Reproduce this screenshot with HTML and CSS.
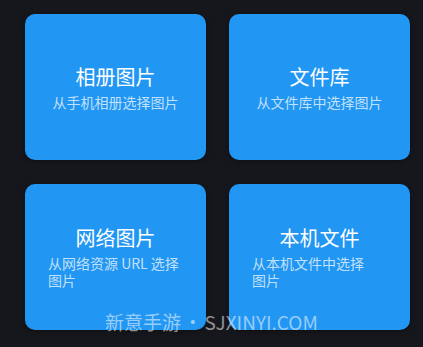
FILE: index.html
```html
<!DOCTYPE html>
<html lang="zh-CN">
<head>
  <meta charset="UTF-8" />
  <meta name="viewport" content="width=device-width, initial-scale=1.0" />
  <title>选择图片</title>
  <link rel="stylesheet" href="styles.css">
</head>
<body>
  <div class="picker">
    <div class="card">
      <h2>相册图片</h2>
      <p>从手机相册选择<span class="word">图片</span></p>
    </div>
    <div class="card">
      <h2>文件库</h2>
      <p>从文件库中选择<span class="word">图片</span></p>
    </div>
    <div class="card">
      <h2>网络图片</h2>
      <p>从网络资源 URL 选择<span class="word">图片</span></p>
    </div>
    <div class="card">
      <h2>本机文件</h2>
      <p>从本机文件中选择<span class="word">图片</span></p>
    </div>
  </div>
  <div class="watermark">新意手游 • SJXINYI.COM</div>
</body>
</html>
```

FILE: styles.css
```css
body {
  margin: 0;
  height: 347px;
  overflow: hidden;
  position: relative;
  background: #16171c;
  font-family: "Noto Sans CJK SC", "Noto Sans", sans-serif;
  color: white;
}
.picker {
  display: grid;
  grid-template-columns: 181px 181px;
  grid-auto-rows: 146px;
  column-gap: 23px;
  row-gap: 24px;
  padding: 14px 0 0 25px;
}
.card {
  background: #2196f3;
  border-radius: 10px;
  box-shadow: 0 1px 4px #00000066;
  display: flex;
  flex-direction: column;
  justify-content: center;
  align-items: center;
  padding: 0 23px;
}
.card h2 {
  margin: 0 0 4px;
  font-size: 20px;
  font-weight: normal;
  line-height: 26px;
  text-align: center;
}
.card p {
  margin: 0;
  width: fit-content;
  max-width: 135px;
  font-size: 14px;
  line-height: 17px;
  color: #ffffffbb;
}
.card p .word {
  white-space: nowrap;
}
.watermark {
  position: absolute;
  left: 105px;
  top: 309px;
  font-size: 19px;
  line-height: 26px;
  color: #ffffff88;
  white-space: nowrap;
  word-spacing: -2px;
}
```
